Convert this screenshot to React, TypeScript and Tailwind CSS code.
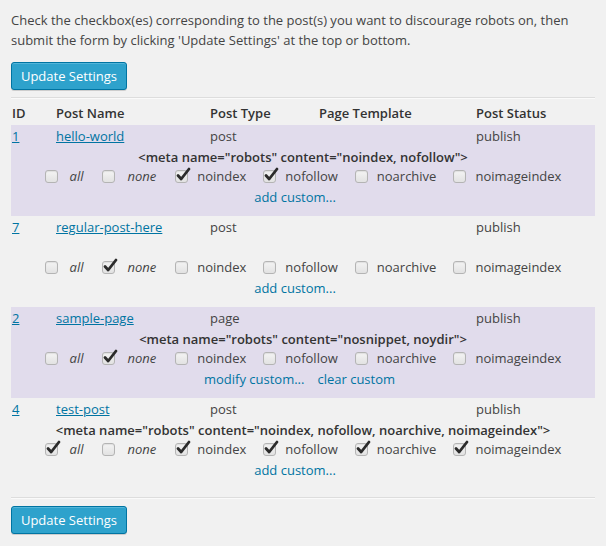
import React from "react";

type Row = {
  id: string;
  name: string;
  type: string;
  status: string;
  meta?: string;
  checked: string[];
  links: string[];
  hl: boolean;
};

const rows: Row[] = [
  { id: "1", name: "hello-world", type: "post", status: "publish", meta: "noindex, nofollow", checked: ["noindex", "nofollow"], links: ["add custom..."], hl: true },
  { id: "7", name: "regular-post-here", type: "post", status: "publish", checked: ["none"], links: ["add custom..."], hl: false },
  { id: "2", name: "sample-page", type: "page", status: "publish", meta: "nosnippet, noydir", checked: ["none"], links: ["modify custom...", "clear custom"], hl: true },
  { id: "4", name: "test-post", type: "post", status: "publish", meta: "noindex, nofollow, noarchive, noimageindex", checked: ["all", "noindex", "nofollow", "noarchive", "noimageindex"], links: ["add custom..."], hl: false },
];

const opts = ["all", "none", "noindex", "nofollow", "noarchive", "noimageindex"];

function Box({ checked }: { checked: boolean }) {
  return (
    <span className="relative inline-block w-[13px] h-[13px] rounded-[3px] border border-[#b4b4b4] bg-gradient-to-b from-[#f4f4f4] to-[#e2e2e2] shadow-[inset_0_1px_1px_rgba(0,0,0,0.08)]">
      {checked && (
        <svg className="absolute left-[0px] top-[-4px]" width="15" height="15" viewBox="0 0 15 15">
          <path d="M2 8.5 L5.2 12 L13 2" fill="none" stroke="#2b2b2b" strokeWidth="2.8" strokeLinecap="round" strokeLinejoin="round" />
        </svg>
      )}
    </span>
  );
}

function Button() {
  return (
    <button className="h-[28px] w-[116px] rounded-[3px] border border-[#0074a2] bg-[#2ea2cc] text-white text-[13px] leading-[26px] shadow-[inset_0_1px_0_rgba(120,200,230,0.5),0_1px_0_rgba(0,0,0,0.15)]">
      Update Settings
    </button>
  );
}

export default function App() {
  return (
    <div className="w-[606px] h-[546px] bg-[#f1f1f1] text-[#444] text-[13px] overflow-hidden" style={{ fontFamily: '"Open Sans", sans-serif' }}>
      <div className="px-[11px]">
        <p className="pt-[10px] leading-5">
          Check the checkbox(es) corresponding to the post(s) you want to discourage robots on, then submit the form by clicking 'Update Settings' at the top or bottom.
        </p>
        <div className="mt-[12px]">
          <Button />
        </div>
        <div className="mt-[7px] border-t border-[#dddddd] border-b border-b-[#fafafa]" />
        <div className="grid grid-cols-[44px_154px_109px_157px_1fr] pl-[1px] h-[26px] items-center font-semibold text-[#333] leading-5 pt-[2px]">
          <div>ID</div>
          <div>Post Name</div>
          <div>Post Type</div>
          <div>Page Template</div>
          <div>Post Status</div>
        </div>
        {rows.map((r) => (
          <div key={r.id} className={`h-[91px] ${r.hl ? "bg-[#e1dcec]" : ""}`}>
            <div className="grid grid-cols-[44px_154px_109px_157px_1fr] pl-[1px] h-[22px] leading-[22px]">
              <div><a className="text-[#0074a2] underline">{r.id}</a></div>
              <div><a className="text-[#0074a2] underline">{r.name}</a></div>
              <div>{r.type}</div>
              <div></div>
              <div>{r.status}</div>
            </div>
            <div className="h-[20px] leading-[20px] text-center font-semibold text-[#333]">
              {r.meta ? `<meta name="robots" content="${r.meta}">` : ""}
            </div>
            <div className="h-[19px] flex items-center justify-center">
              {opts.map((o, i) => {
                const italic = o === "all" || o === "none";
                return (
                  <span key={o} className={`flex items-center ${i > 0 ? (opts[i - 1] === "all" || opts[i - 1] === "none" ? "ml-[19px]" : "ml-[17px]") : ""}`}>
                    <Box checked={r.checked.includes(o)} />
                    <span className={italic ? "ml-[12px] italic" : "ml-[9px]"}>{o}</span>
                  </span>
                );
              })}
            </div>
            <div className={`h-[21px] leading-[23px] flex justify-center gap-[13px] ${r.links.length > 1 ? "pr-[7px]" : "pr-[16px]"}`}>
              {r.links.map((l) => (
                <a key={l} className="text-[#0074a2]">{l}</a>
              ))}
            </div>
          </div>
        ))}
        <div className="mt-[8px] border-t border-[#dddddd] border-b border-b-[#fafafa]" />
        <div className="mt-[7px]">
          <Button />
        </div>
      </div>
    </div>
  );
}
